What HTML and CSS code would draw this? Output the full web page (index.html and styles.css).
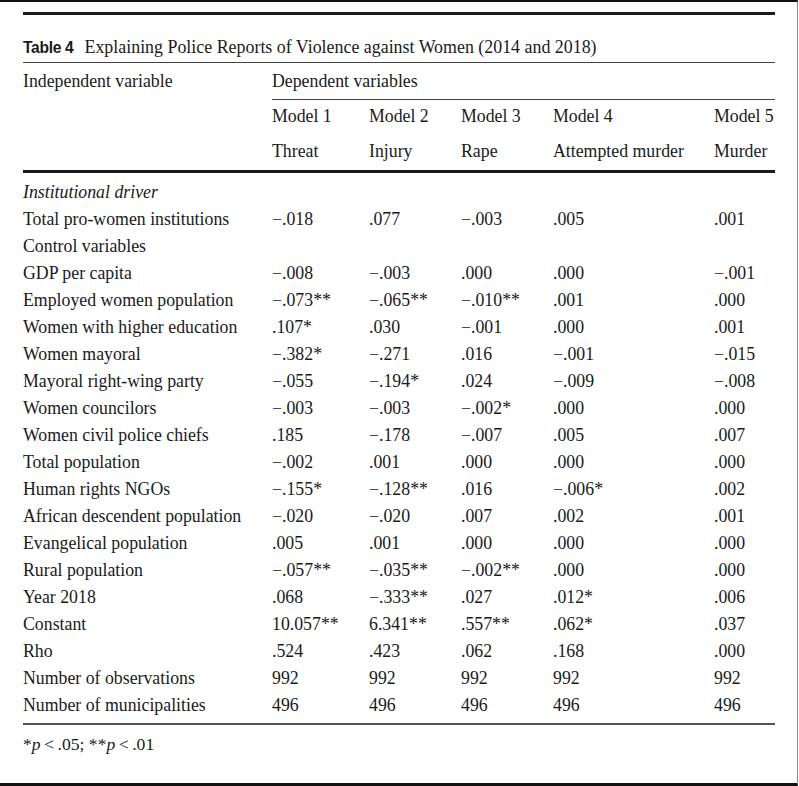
FILE: index.html
```html
<!DOCTYPE html>
<html lang="en">
<head>
<meta charset="utf-8">
<title>Table 4</title>
<link rel="stylesheet" href="styles.css">
</head>
<body>
<div class="frame">
  <div class="sheet">
    <div class="caption"><span class="tlabel">Table 4</span><span class="ttext">Explaining Police Reports of Violence against Women (2014 and 2018)</span></div>
    <table class="tbl">
      <colgroup>
        <col class="c0"><col class="c1"><col class="c2"><col class="c3"><col class="c4"><col class="c5">
      </colgroup>
      <thead>
        <tr class="h1"><th>Independent variable</th><th colspan="5" class="dep">Dependent variables</th></tr>
        <tr class="h2"><th></th><th>Model 1</th><th>Model 2</th><th>Model 3</th><th>Model 4</th><th>Model 5</th></tr>
        <tr class="h3"><th></th><th>Threat</th><th>Injury</th><th>Rape</th><th>Attempted murder</th><th>Murder</th></tr>
      </thead>
      <tbody>
        <tr class="first"><td class="it">Institutional driver</td><td></td><td></td><td></td><td></td><td></td></tr>
        <tr><td>Total pro-women institutions</td><td>−.018</td><td>.077</td><td>−.003</td><td>.005</td><td>.001</td></tr>
        <tr><td>Control variables</td><td></td><td></td><td></td><td></td><td></td></tr>
        <tr><td>GDP per capita</td><td>−.008</td><td>−.003</td><td>.000</td><td>.000</td><td>−.001</td></tr>
        <tr><td>Employed women population</td><td>−.073**</td><td>−.065**</td><td>−.010**</td><td>.001</td><td>.000</td></tr>
        <tr><td>Women with higher education</td><td>.107*</td><td>.030</td><td>−.001</td><td>.000</td><td>.001</td></tr>
        <tr><td>Women mayoral</td><td>−.382*</td><td>−.271</td><td>.016</td><td>−.001</td><td>−.015</td></tr>
        <tr><td>Mayoral right-wing party</td><td>−.055</td><td>−.194*</td><td>.024</td><td>−.009</td><td>−.008</td></tr>
        <tr><td>Women councilors</td><td>−.003</td><td>−.003</td><td>−.002*</td><td>.000</td><td>.000</td></tr>
        <tr><td>Women civil police chiefs</td><td>.185</td><td>−.178</td><td>−.007</td><td>.005</td><td>.007</td></tr>
        <tr><td>Total population</td><td>−.002</td><td>.001</td><td>.000</td><td>.000</td><td>.000</td></tr>
        <tr><td>Human rights NGOs</td><td>−.155*</td><td>−.128**</td><td>.016</td><td>−.006*</td><td>.002</td></tr>
        <tr><td>African descendent population</td><td>−.020</td><td>−.020</td><td>.007</td><td>.002</td><td>.001</td></tr>
        <tr><td>Evangelical population</td><td>.005</td><td>.001</td><td>.000</td><td>.000</td><td>.000</td></tr>
        <tr><td>Rural population</td><td>−.057**</td><td>−.035**</td><td>−.002**</td><td>.000</td><td>.000</td></tr>
        <tr><td>Year 2018</td><td>.068</td><td>−.333**</td><td>.027</td><td>.012*</td><td>.006</td></tr>
        <tr><td>Constant</td><td>10.057**</td><td>6.341**</td><td>.557**</td><td>.062*</td><td>.037</td></tr>
        <tr><td>Rho</td><td>.524</td><td>.423</td><td>.062</td><td>.168</td><td>.000</td></tr>
        <tr><td>Number of observations</td><td>992</td><td>992</td><td>992</td><td>992</td><td>992</td></tr>
        <tr class="last"><td>Number of municipalities</td><td>496</td><td>496</td><td>496</td><td>496</td><td>496</td></tr>
      </tbody>
    </table>
    <p class="note">*<i>p</i>&#8201;&lt;&#8201;.05; **<i>p</i>&#8201;&lt;&#8201;.01</p>
  </div>
</div>
</body>
</html>
```
FILE: styles.css
```css
html, body {
  margin: 0;
  padding: 0;
  background: #ffffff;
}
.frame {
  width: 797px;
  height: 781px;
  border-top: 2px solid #111;
  border-bottom: 3px solid #111;
  border-right: 1px solid #8a8a8a;
  background: #fff;
  overflow: hidden;
}
.sheet {
  padding: 10px 0 0 23px;
  font-family: "Liberation Serif", "Times New Roman", serif;
  font-size: 17.8px;
  color: #1a1a1a;
}
.caption {
  width: 752px;
  border-top: 3px solid #1a1a1a;
  border-bottom: 1px solid #444;
  padding: 22px 0 4px;
  line-height: 20px;
  white-space: nowrap;
}
.ttext {
  font-size: 17.9px;
}
.tlabel {
  font-family: "Liberation Sans", Arial, sans-serif;
  font-weight: bold;
  font-size: 15.6px;
  letter-spacing: -0.3px;
  margin-right: 11px;
}
.tbl {
  width: 752px;
  border-collapse: collapse;
  table-layout: fixed;
}
.c0 { width: 249px; }
.c1 { width: 97px; }
.c2 { width: 92px; }
.c3 { width: 92px; }
.c4 { width: 161px; }
.c5 { width: 61px; }
.tbl th, .tbl td {
  padding: 0;
  text-align: left;
  font-weight: normal;
  white-space: nowrap;
  vertical-align: middle;
}
.h1 th {
  height: 36px;
}
.h1 .dep {
  border-bottom: 1px solid #444;
}
.h2 th {
  height: 32px;
}
.h3 th {
  height: 37px;
  padding-top: 1px;
}
.h3 {
  border-bottom: 3px solid #1a1a1a;
}
.tbl td {
  line-height: 27px;
}
.first td {
  padding-top: 6px;
}
.last td {
  padding-bottom: 4px;
}
.tbl tbody {
  border-bottom: 2px solid #555;
}
.it {
  font-style: italic;
}
.note {
  margin: 9px 0 0;
  line-height: 20px;
  font-size: 17.6px;
}
```
